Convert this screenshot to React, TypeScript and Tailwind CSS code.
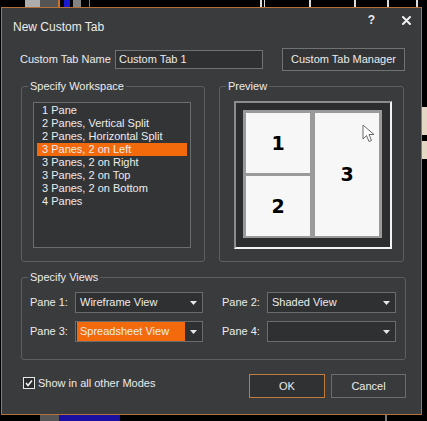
const workspaces = [
  "1 Pane",
  "2 Panes, Vertical Split",
  "2 Panes, Horizontal Split",
  "3 Panes, 2 on Left",
  "3 Panes, 2 on Right",
  "3 Panes, 2 on Top",
  "3 Panes, 2 on Bottom",
  "4 Panes",
];

const Arrow = () => (
  <svg width="7" height="4" viewBox="0 0 7 4">
    <path d="M0 0 L7 0 L3.5 4 Z" fill="#e8e8e8" />
  </svg>
);

const Select = ({
  value,
  active = false,
  w,
}: {
  value: string;
  active?: boolean;
  w: string;
}) => (
  <div
    className={`${w} h-[21px] flex items-center border border-[#6a6c6e] bg-[#2f3032]`}
  >
    <div
      className={`flex-1 h-full flex items-center pl-[3px] ml-[1px] ${
        active ? "bg-[#f26a0c] my-[2px] h-[17px]" : ""
      }`}
    >
      {value}
    </div>
    <div className="w-[17px] flex justify-center">
      <Arrow />
    </div>
  </div>
);

const Group = ({
  title,
  className,
  children,
}: {
  title: string;
  className: string;
  children: React.ReactNode;
}) => (
  <div className={`relative border border-[#5c5e60] rounded-[3px] ${className}`}>
    <span className="absolute -top-[8px] left-[6px] px-[2px] bg-[#3a3b3d] leading-[14px]">
      {title}
    </span>
    {children}
  </div>
);

const Cell = ({ n, className = "" }: { n: string; className?: string }) => (
  <div
    className={`relative bg-[#f7f7f7] flex items-center justify-center text-black font-bold text-[19px] ${className}`}
    style={{ fontFamily: '"DejaVu Sans", sans-serif' }}
  >
    {n}
  </div>
);

export default function App() {
  return (
    <div
      className="w-[427px] h-[421px] bg-black overflow-hidden flex flex-col text-[11px] text-[#ececec]"
      style={{ fontFamily: '"Liberation Sans", Arial, sans-serif' }}
    >
      {/* desktop strip above the dialog */}
      <div className="h-[7px] flex items-stretch">
        <div className="ml-[25px] w-[15px] bg-[#d8d8d8] opacity-80" />
        <div className="w-[18px] bg-[#555]" />
        <div className="w-[2px] bg-[#c9732d]" />
        <div className="ml-[4px] w-[6px] bg-[#1a1ad0]" />
        <div className="ml-[3px] w-[8px] bg-[#bbb] opacity-70" />
        <div className="ml-[8px] w-[1px] bg-[#777]" />
        <div className="ml-[170px] w-[2px] bg-[#ddd]" />
        <div className="ml-[2px] w-[1px] bg-[#ddd]" />
        <div className="ml-[44px] w-[2px] bg-[#ddd]" />
        <div className="ml-[43px] w-[2px] bg-[#ddd]" />
        <div className="ml-[31px] w-[2px] bg-[#ddd]" />
        <div className="ml-[27px] w-[2px] bg-[#ddd]" />
      </div>

      <div className="flex">
        <div className="w-[1px]" />
        <div className="w-[421px] h-[408px] border border-[#b4713a] bg-[#3a3b3d] flex flex-col">
          {/* title bar */}
          <div className="h-[40px] flex items-start">
            <div className="ml-[11px] mt-[12px] text-[12px] leading-[14px]">
              New Custom Tab
            </div>
            <div className="ml-auto mt-[5px] mr-[10px] flex items-center gap-[27px]">
              <span className="font-bold text-[12px] leading-[14px]">?</span>
              <svg width="9" height="9" viewBox="0 0 9 9">
                <path
                  d="M1 1 L8 8 M8 1 L1 8"
                  stroke="#f0f0f0"
                  strokeWidth="2"
                  strokeLinecap="round"
                />
              </svg>
            </div>
          </div>

          {/* name row */}
          <div className="h-[23px] flex items-center pl-[18px]">
            <div className="w-[95px]">Custom Tab Name</div>
            <div className="w-[148px] h-[19px] border border-[#707274] bg-[#2f3032] flex items-center pl-[3px]">
              Custom Tab 1
            </div>
            <div className="ml-[19px] w-[123px] h-[23px] border border-[#707274] bg-[#333436] flex items-center justify-center">
              Custom Tab Manager
            </div>
          </div>

          {/* workspace + preview */}
          <div className="mt-[15px] flex pl-[19px] gap-[14px]">
            <Group title="Specify Workspace" className="w-[184px] h-[176px]">
              <div className="ml-[11px] mt-[15px] w-[158px] h-[146px] border border-[#6a6c6e] bg-[#333436] px-[3px] pt-[1px]">
                {workspaces.map((w, i) => (
                  <div
                    key={w}
                    className={`h-[13px] leading-[13px] pl-[5px] ${
                      i === 3 ? "bg-[#f26a0c]" : ""
                    }`}
                  >
                    {w}
                  </div>
                ))}
              </div>
            </Group>

            <Group title="Preview" className="w-[185px] h-[176px]">
              <div className="ml-[14px] mt-[14px] w-[158px] h-[148px] border-[2px] border-t-[#8c8c8c] border-l-[#8c8c8c] border-r-[#f4f4f4] border-b-[#f4f4f4] bg-[#2c2d2f] pl-[7px] pt-[7px]">
                <div className="w-[139px] h-[128px] bg-[#9a9a9a] p-[3px] pb-[2px] grid grid-cols-[64px_64px] grid-rows-[60px_60px] gap-x-[5px] gap-y-[3px]">
                  <Cell n="1" />
                  <Cell n="3" className="row-span-2" />
                  <Cell n="2" />
                </div>
              </div>
              {/* mouse cursor over preview */}
              <svg
                className="absolute left-[142px] top-[37px]"
                width="14"
                height="20"
                viewBox="0 0 14 20"
              >
                <path
                  d="M1 1 L1 15 L4.5 11.5 L7 17.5 L9.5 16.5 L7 10.5 L12 10.5 Z"
                  fill="#ffffff"
                  stroke="#6a6a6a"
                  strokeWidth="1"
                  strokeLinejoin="round"
                />
              </svg>
            </Group>
          </div>

          {/* views */}
          <Group title="Specify Views" className="mt-[15px] ml-[19px] w-[385px] h-[83px]">
            <div className="mt-[14px] pl-[8px] flex flex-col gap-[8px]">
              <div className="flex items-center">
                <div className="w-[45px]">Pane 1:</div>
                <Select value="Wireframe View" w="w-[128px]" />
                <div className="ml-[19px] w-[45px]">Pane 2:</div>
                <Select value="Shaded View" w="w-[129px]" />
              </div>
              <div className="flex items-center">
                <div className="w-[45px]">Pane 3:</div>
                <Select value="Spreadsheet View" active w="w-[128px]" />
                <div className="ml-[19px] w-[45px]">Pane 4:</div>
                <Select value="" w="w-[129px]" />
              </div>
            </div>
          </Group>

          {/* bottom row */}
          <div className="mt-[14px] flex items-start">
            <div className="ml-[21px] mt-[1px] flex items-center gap-[3px]">
              <div className="w-[12px] h-[12px] border border-[#e8e8e8] bg-[#2c2d2f] flex items-center justify-center">
                <svg width="8" height="8" viewBox="0 0 8 8">
                  <path
                    d="M1 4 L3 6.5 L7 1.5"
                    stroke="#f0f0f0"
                    strokeWidth="1.6"
                    fill="none"
                  />
                </svg>
              </div>
              <span>Show in all other Modes</span>
            </div>
            <div className="ml-auto mr-[15px] flex gap-[6px]">
              <div className="w-[76px] h-[24px] border border-[#c07a3e] bg-[#2f3133] flex items-center justify-center">
                OK
              </div>
              <div className="w-[75px] h-[24px] border border-[#6a6c6e] bg-[#383a3c] flex items-center justify-center">
                Cancel
              </div>
            </div>
          </div>
        </div>
        {/* desktop strip to the right */}
        <div className="flex-1 flex flex-col">
          <div className="mt-[100px] h-[28px] bg-[#e4d8c4]" />
          <div className="mt-[6px] h-[18px] bg-[#e4d8c4]" />
        </div>
      </div>

      {/* desktop strip below */}
      <div className="flex-1 flex">
        <div className="ml-[40px] w-[24px] bg-[#555]" />
        <div className="w-[80px] bg-[#1a0fa0]" />
        <div className="ml-[265px] w-[2px] bg-[#777]" />
        <div className="ml-[40px] flex-1 bg-[#1a0fa0]" />
      </div>
    </div>
  );
}
